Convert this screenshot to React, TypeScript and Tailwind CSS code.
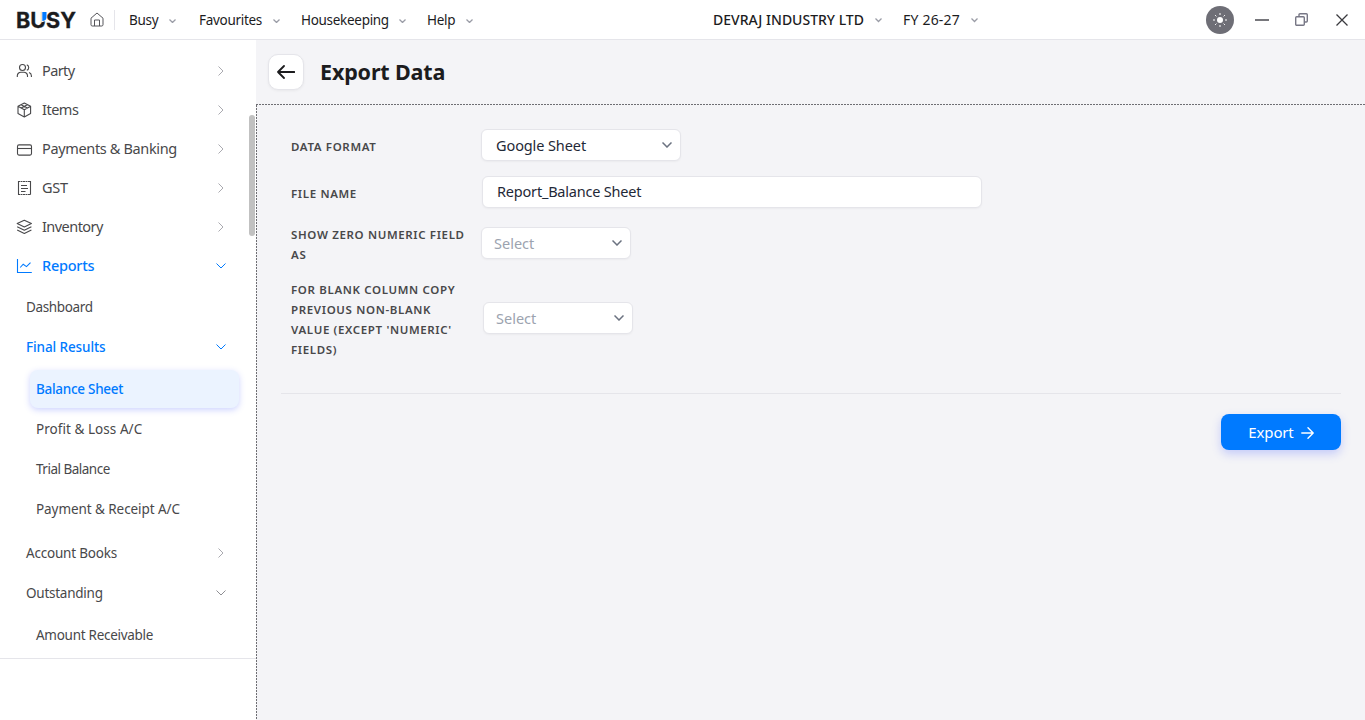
import type { ReactNode } from "react";
import clsx from "clsx";

type IconName = "party" | "items" | "payments" | "gst" | "inventory" | "reports";

const mainMenu: { label: string; icon: IconName; tracking: string }[] = [
  { label: "Party", icon: "party", tracking: "tracking-[-0.6px]" },
  { label: "Items", icon: "items", tracking: "tracking-[-0.5px]" },
  { label: "Payments & Banking", icon: "payments", tracking: "tracking-[-0.35px]" },
  { label: "GST", icon: "gst", tracking: "tracking-[-0.3px]" },
  { label: "Inventory", icon: "inventory", tracking: "tracking-[-0.55px]" },
  { label: "Reports", icon: "reports", tracking: "tracking-[-0.25px]" },
];

const finalResults = [
  { label: "Balance Sheet", tracking: "tracking-[-0.28px]" },
  { label: "Profit & Loss A/C", tracking: "tracking-[0.05px]" },
  { label: "Trial Balance", tracking: "tracking-[-0.5px]" },
  { label: "Payment & Receipt A/C", tracking: "tracking-[-0.07px]" },
];

function Chevron({ className, size, stroke = 1 }: { className?: string; size: number; stroke?: number }) {
  return (
    <svg className={clsx("shrink-0", className)} width={size} height={size / 2 + 1} viewBox={`0 0 ${size} ${size / 2 + 1}`} fill="none" stroke="currentColor" strokeWidth={stroke}>
      <path d={`M.5 .5 L${size / 2} ${size / 2} L${size - 0.5} .5`} />
    </svg>
  );
}

function ChevronRight() {
  return (
    <svg className="shrink-0 text-[#aaaab0]" width="10" height="10" viewBox="0 0 10 10" fill="none" stroke="currentColor">
      <path d="M2.5 .5 7 5 2.5 9.5" />
    </svg>
  );
}

function MenuIcon({ name }: { name: IconName }) {
  const paths: Record<IconName, ReactNode> = {
    party: (
      <>
        <circle cx="6.5" cy="4.5" r="3" />
        <path d="M1.300 14v-1.200a3.600 3.600 0 0 1 3.600-3.600h3a3.600 3.600 0 0 1 3.600 3.600V14M10.800 1.700a3 3 0 0 1 0 5.600M13 9.600a3.500 3.500 0 0 1 2.400 3.200V14" />
      </>
    ),
    items: (
      <path d="M8.300 1 14.600 4.300v7.300L8.300 15 2 11.600V4.300zM2 4.300 8.300 7.800l6.300-3.500M8.300 7.800V15M5.100 2.700l6.300 3.400M5.100 6 11.400 2.700" strokeLinejoin="round" />
    ),
    payments: (
      <>
        <rect x="1.500" y="3.900" width="14" height="10.200" rx="1.500" />
        <path d="M1.500 7.500h14" />
      </>
    ),
    gst: (
      <>
        <path d="M2.500 1v13.500M14.500 1v13.500" />
        <path d="M2 1.500h13M2 14.500h13" strokeDasharray="2 .5" />
        <path d="M5 5.500h6M5 8.500h7M5 11.500h4.500" />
      </>
    ),
    inventory: (
      <path d="M8.300 1.200 15.400 4.600 8.300 8 1.200 4.600zM1.200 7.800l7.100 3.400 7.100-3.400M1.200 11l7.100 3.500 7.100-3.500" strokeLinejoin="round" />
    ),
    reports: <path d="M1.500 1v13.500h14.300M4.200 9.500l3-3.300 3.300 2.400 4-4" />,
  };
  return (
    <svg className="shrink-0 overflow-visible" width="16" height="16" viewBox="0 0 16 16" fill="none" stroke="currentColor" strokeWidth="1.100">
      {paths[name]}
    </svg>
  );
}

function Logo() {
  return (
    <svg width="60" height="32" viewBox="0 0 60 32">
      <text x="0" y="23.700" fontFamily="Inter, sans-serif" fontSize="21" fontWeight="700" fill="#1c1c1e" stroke="#1c1c1e" strokeWidth=".3" textLength="60" lengthAdjust="spacingAndGlyphs">
        BUSY
      </text>
      <path d="M25.200 7h5.800v9.500l-5.800 2z" fill="#fff" />
      <path d="M26.300 8h4.200v5.500c0 2-1.500 3.300-4.200 3.500z" fill="#007aff" />
    </svg>
  );
}

function TopMenu({ label, className }: { label: string; className: string }) {
  return (
    <div className={clsx("flex shrink-0 items-center justify-between", className)}>
      <span className="whitespace-nowrap">{label}</span>
      <Chevron size={7} stroke={1.3} className="mt-[2px] text-[#9a9ca6]" />
    </div>
  );
}

function Header() {
  return (
    <header className="flex h-10 shrink-0 items-center border-b border-[#e5e5ea] bg-white pl-4 text-[13.5px] text-[#1c1c1e]">
      <Logo />
      <svg className="ml-[14px]" width="14" height="15" viewBox="0 0 14 15" fill="none" stroke="#55555a">
        <path d="M1 6.200 7 1l6 5.200v6.600c0 .7-.5 1.200-1.200 1.200H2.200C1.500 14 1 13.500 1 12.800zM4.500 14V8h5v6" />
      </svg>
      <div className="ml-[10px] h-5 w-px bg-[#e5e5ea]" />
      <nav className="ml-[14px] flex w-[584px] items-center pt-px tracking-[-0.3px]">
        <TopMenu label="Busy" className="w-[47px]" />
        <TopMenu label="Favourites" className="ml-[23px] w-[81px]" />
        <TopMenu label="Housekeeping" className="ml-[21px] w-[105px]" />
        <TopMenu label="Help" className="ml-[21px] w-[46px]" />
      </nav>
      <TopMenu label="DEVRAJ INDUSTRY LTD" className="w-[169px] text-[14px] font-medium" />
      <TopMenu label="FY 26-27" className="ml-[21px] w-[75px] text-[14px] tracking-[0.2px]" />
      <div className="ml-auto flex items-center pr-[17px]">
        <div className="flex size-7 items-center justify-center rounded-full bg-[#6e6e76]">
          <svg width="14" height="14" viewBox="0 0 14 14" fill="none" stroke="#fff">
            <circle cx="7" cy="7" r="3" fill="#fff" stroke="none" />
            <path d="M7 0v2M7 12v2M0 7h2M12 7h2M2.100 2.100l1.300 1.300M10.600 10.600l1.300 1.300M2.100 11.900l1.300-1.300M10.600 3.400l1.300-1.300" />
          </svg>
        </div>
        <div className="ml-[21px] h-[2px] w-[14px] bg-[#77777c]" />
        <svg className="ml-[26px]" width="13" height="13" viewBox="0 0 13 13" fill="none" stroke="#777785" strokeWidth="1.400">
          <rect x=".7" y="3.700" width="8.600" height="8.600" rx="1" />
          <path d="M4 3.500V1.700c0-.6.400-1 1-1h6.300c.6 0 1 .4 1 1V8c0 .6-.4 1-1 1H9.500" />
        </svg>
        <svg className="ml-[28px]" width="12" height="12" viewBox="0 0 12 12" stroke="#3a3a3e" strokeWidth="1.300">
          <path d="M.5.5l11 11M11.500.5l-11 11" />
        </svg>
      </div>
    </header>
  );
}

function Sidebar() {
  return (
    <aside className="flex w-64 shrink-0 flex-col bg-white text-[#48484a]">
      <div className="relative h-[619px] shrink-0 border-b border-[#e5e5ea] pt-[11px]">
        {mainMenu.map((item) => {
          const open = item.label === "Reports";
          return (
            <div key={item.label} className={clsx("flex h-[39px] items-center pr-[30px] pl-4", open && "text-[#007aff]")}>
              <MenuIcon name={item.icon} />
              <span className={clsx("ml-[10px] flex-1 text-[14.5px]", item.tracking, open && "font-medium")}>{item.label}</span>
              {open ? <Chevron size={10} className="text-[#007aff]" /> : <ChevronRight />}
            </div>
          );
        })}
        <div className="mt-[2px] text-[13.5px]">
          <div className="flex h-10 items-center pl-[26px] tracking-[-0.35px]">Dashboard</div>
          <div className="flex h-10 items-center justify-between pr-[30px] pl-[26px] font-medium tracking-[-0.1px] text-[#007aff]">
            Final Results
            <Chevron size={10} />
          </div>
          <div className="pt-[3px]">
            {finalResults.map((item, i) => (
              <div
                key={item.label}
                className={clsx(
                  "flex items-center",
                  item.tracking,
                  i === 0
                    ? "mr-[17px] mb-px ml-[30px] h-[38px] rounded-lg bg-[#ebf3ff] pl-[6px] font-medium text-[#007aff] shadow-[0_2px_6px_rgba(90,110,255,0.3)]"
                    : "h-10 pl-9",
                )}
              >
                {item.label}
              </div>
            ))}
          </div>
          <div className="mt-[4px] flex h-10 items-center justify-between pr-[30px] pl-[26px] tracking-[-0.2px]">
            Account Books
            <ChevronRight />
          </div>
          <div className="flex h-10 items-center justify-between pr-[30px] pl-[26px] tracking-[-0.25px]">
            Outstanding
            <Chevron size={10} className="text-[#8e8e93]" />
          </div>
          <div className="mt-[2px] flex h-10 items-center pl-9 tracking-[-0.28px]">Amount Receivable</div>
        </div>
        {/* scrollbar thumb */}
        <div className="absolute top-[75px] right-px h-[121px] w-[6px] rounded-full bg-[#c1c1c1]" />
      </div>
    </aside>
  );
}

function Select({ value, placeholder, className }: { value?: string; placeholder?: string; className: string }) {
  return (
    <div className={clsx("flex h-8 items-center justify-between rounded-md border border-[#e5e5ea] bg-white pr-[8px] text-[14.5px] shadow-[0_1px_2px_rgba(0,0,0,0.04)]", className)}>
      <span className={clsx("pt-[2px]", value ? "text-[#1f2937]" : "text-[#9ca3af]")}>{value ?? placeholder}</span>
      <Chevron size={10} stroke={1.5} className="text-[#6b7280]" />
    </div>
  );
}

function Label({ children }: { children: ReactNode }) {
  return <div className="w-[190px] shrink-0 text-[11.5px] leading-5 font-semibold tracking-[0.65px] text-[#48484a]">{children}</div>;
}

export default function App() {
  return (
    <div className="flex h-[720px] w-[1365px] flex-col overflow-hidden bg-[#f4f4f7] font-['Noto_Sans',sans-serif]">
      <Header />
      <div className="flex min-h-0 flex-1">
        <Sidebar />
        <main className="flex flex-1 flex-col">
          <div className="flex h-16 shrink-0 items-center pl-3">
            <button className="flex size-9 items-center justify-center rounded-[10px] border border-[#e5e5ea] bg-white shadow-[0_1px_3px_rgba(0,0,0,0.05)]">
              <svg width="18" height="14" viewBox="0 0 18 14" fill="none" stroke="#1c1c1e" strokeWidth="1.800" strokeLinecap="round" strokeLinejoin="round">
                <path d="M7 1 1 7l6 6M1 7h16.300" />
              </svg>
            </button>
            <h1 className="ml-4 text-[21.5px] font-bold tracking-[-0.15px] text-[#1c1c1e]">Export Data</h1>
          </div>
          {/* fine dashed rules along the top and left edges */}
          <div className="h-px shrink-0 bg-[repeating-linear-gradient(90deg,#6e6e73_0_2px,transparent_2px_3px)]" />
          <div className="flex flex-1">
            <div className="w-px shrink-0 bg-[repeating-linear-gradient(180deg,#6e6e73_0_2px,transparent_2px_3px)]" />
            <div className="flex-1 pt-6 pr-6 pl-6">
              <div className="flex items-start pl-[10px]">
                <div className="pt-[8px]"><Label>DATA FORMAT</Label></div>
                <Select value="Google Sheet" className="w-[200px] pl-[14px] tracking-[-0.1px]" />
              </div>
              <div className="mt-[15px] flex items-start pl-[10px]">
                <div className="pt-[8px]"><Label>FILE NAME</Label></div>
                <div className="ml-px flex h-8 w-[500px] items-center rounded-md border border-[#e5e5ea] bg-white pb-px pl-[14px] text-[14.5px] tracking-[-0.2px] text-[#1f2937] shadow-[0_1px_2px_rgba(0,0,0,0.04)]">
                  Report_Balance Sheet
                </div>
              </div>
              <div className="mt-[17px] flex items-center pl-[10px]">
                <Label>SHOW ZERO NUMERIC FIELD<br />AS</Label>
                <Select placeholder="Select" className="-mt-[4px] w-[150px] pl-3" />
              </div>
              <div className="mt-[15px] flex items-center pl-[10px]">
                <Label>FOR BLANK COLUMN COPY<br />PREVIOUS NON-BLANK<br />VALUE (EXCEPT 'NUMERIC'<br />FIELDS)</Label>
                <Select placeholder="Select" className="-mt-[4px] ml-[2px] w-[150px] pl-3" />
              </div>
              <div className="mt-[33px] border-t border-[#e5e5ea]" />
              <div className="mt-5 flex justify-end">
                <button className="flex h-9 w-[120px] items-center justify-center gap-[7px] rounded-lg bg-[#007aff] text-[15px] tracking-[-0.15px] text-white shadow-[0_4px_10px_rgba(90,110,255,0.3)]">
                  Export
                  <svg className="mt-px" width="13" height="12" viewBox="0 0 13 12" fill="none" stroke="#fff" strokeWidth="1.400" strokeLinecap="round" strokeLinejoin="round">
                    <path d="M7 .8 12.200 6 7 11.200M.8 6h11.400" />
                  </svg>
                </button>
              </div>
            </div>
          </div>
        </main>
      </div>
    </div>
  );
}
